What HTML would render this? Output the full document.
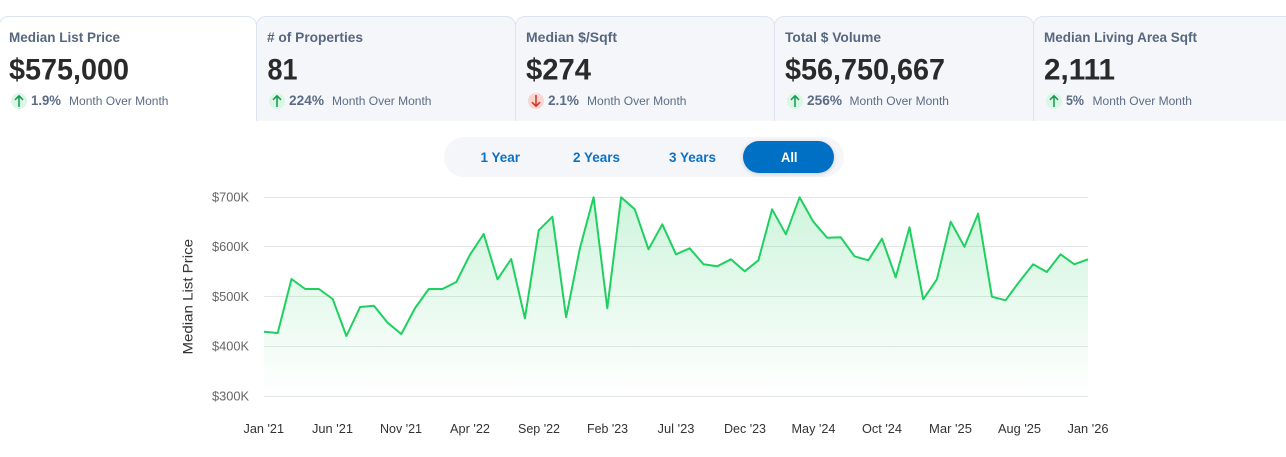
<!DOCTYPE html>
<html lang="en">
<head>
<meta charset="utf-8">
<title>Market Stats</title>
<style>
html,body{margin:0;padding:0;background:#fff;width:1286px;height:457px;overflow:hidden}
svg{display:block;position:absolute;left:0;top:0}
text{font-family:"Liberation Sans",Arial,sans-serif}
.l{font-size:14px;font-weight:700;fill:#56677f}
.v{font-size:29.5px;font-weight:700;fill:#2a2a2a}
.p{font-size:14px;font-weight:700;fill:#5b6b84}
.m{font-size:12.3px;fill:#5c6c85}
.t{font-size:14px;font-weight:700;fill:#0d72c4}
.y{font-size:12.5px;fill:#666}
.x{font-size:12.5px;fill:#333}
.g{stroke:#e6e6e6;stroke-width:1}
.card{fill:#f5f6fa;stroke:#dde3f0;stroke-width:1}
.ar{fill:none;stroke-width:1.5}
</style>
</head>
<body>
<svg width="1286" height="457" viewBox="0 0 1286 457" xmlns="http://www.w3.org/2000/svg">
<defs>
<linearGradient id="ag" x1="0" y1="197" x2="0" y2="396" gradientUnits="userSpaceOnUse">
<stop offset="0" stop-color="#22cf60" stop-opacity=".22"/>
<stop offset="1" stop-color="#22cf60" stop-opacity="0"/>
</linearGradient>
<filter id="sh" x="-20%" y="-30%" width="140%" height="170%"><feDropShadow dx="0" dy="1" stdDeviation="2" flood-color="#000" flood-opacity=".18"/></filter>
</defs>

<!-- cards -->
<path class="card" d="M1033.5 122V26a9.5 9.5 0 0 1 9.5-9.5H1290V122"/>
<path class="card" d="M774.5 122V26a9.5 9.5 0 0 1 9.5-9.5H1024a9.5 9.5 0 0 1 9.5 9.5V122"/>
<path class="card" d="M515.5 122V26a9.5 9.5 0 0 1 9.5-9.5H765a9.5 9.5 0 0 1 9.5 9.5V122"/>
<path class="card" d="M256.5 122V26a9.5 9.5 0 0 1 9.5-9.5H506a9.5 9.5 0 0 1 9.5 9.5V122"/>
<path d="M-1 122V26a9.5 9.5 0 0 1 9.5-9.5H247a9.5 9.5 0 0 1 9.5 9.5V122" fill="#fff" stroke="#dde3f0"/>
<rect x="0" y="121" width="1286" height="6" fill="#fff"/>

<!-- card 1 -->
<text class="l" x="9" y="42" textLength="111" lengthAdjust="spacingAndGlyphs">Median List Price</text>
<text class="v" x="9" y="79.500" textLength="120" lengthAdjust="spacingAndGlyphs">$575,000</text>
<circle cx="19" cy="101" r="8" fill="#d9f7e4"/>
<path class="ar" stroke="#12994f" d="M19 107V96M15 99.800L19 95.800L23 99.800"/>
<text class="p" x="31" y="105" textLength="30" lengthAdjust="spacingAndGlyphs">1.9%</text>
<text class="m" x="69" y="105" textLength="99.500" lengthAdjust="spacingAndGlyphs">Month Over Month</text>

<!-- card 2 -->
<text class="l" x="267" y="42" textLength="96" lengthAdjust="spacingAndGlyphs"># of Properties</text>
<text class="v" x="267.500" y="79.500" textLength="30" lengthAdjust="spacingAndGlyphs">81</text>
<circle cx="277" cy="101" r="8" fill="#d9f7e4"/>
<path class="ar" stroke="#12994f" d="M277 107V96M273 99.800L277 95.800L281 99.800"/>
<text class="p" x="289" y="105" textLength="35" lengthAdjust="spacingAndGlyphs">224%</text>
<text class="m" x="332" y="105" textLength="99.500" lengthAdjust="spacingAndGlyphs">Month Over Month</text>

<!-- card 3 -->
<text class="l" x="526" y="42" textLength="91" lengthAdjust="spacingAndGlyphs">Median $/Sqft</text>
<text class="v" x="526" y="79.500" textLength="65" lengthAdjust="spacingAndGlyphs">$274</text>
<circle cx="536" cy="101" r="8" fill="#fbd5d0"/>
<path class="ar" stroke="#d0351f" d="M536 95V106M532 102.200L536 106.200L540 102.200"/>
<text class="p" x="548" y="105" textLength="31" lengthAdjust="spacingAndGlyphs">2.1%</text>
<text class="m" x="587" y="105" textLength="99.500" lengthAdjust="spacingAndGlyphs">Month Over Month</text>

<!-- card 4 -->
<text class="l" x="785" y="42" textLength="96" lengthAdjust="spacingAndGlyphs">Total $ Volume</text>
<text class="v" x="785" y="79.500" textLength="160" lengthAdjust="spacingAndGlyphs">$56,750,667</text>
<circle cx="795" cy="101" r="8" fill="#d9f7e4"/>
<path class="ar" stroke="#12994f" d="M795 107V96M791 99.800L795 95.800L799 99.800"/>
<text class="p" x="807" y="105" textLength="35" lengthAdjust="spacingAndGlyphs">256%</text>
<text class="m" x="849.500" y="105" textLength="99.500" lengthAdjust="spacingAndGlyphs">Month Over Month</text>

<!-- card 5 -->
<text class="l" x="1044" y="42" textLength="153" lengthAdjust="spacingAndGlyphs">Median Living Area Sqft</text>
<text class="v" x="1044" y="79.500" textLength="71" lengthAdjust="spacingAndGlyphs">2,111</text>
<circle cx="1054" cy="101" r="8" fill="#d9f7e4"/>
<path class="ar" stroke="#12994f" d="M1054 107V96M1050 99.800L1054 95.800L1058 99.800"/>
<text class="p" x="1066" y="105" textLength="18" lengthAdjust="spacingAndGlyphs">5%</text>
<text class="m" x="1092.500" y="105" textLength="99.500" lengthAdjust="spacingAndGlyphs">Month Over Month</text>

<!-- toggle -->
<rect x="444" y="137" width="400" height="40" rx="20" fill="#f5f6fa"/>
<rect x="743" y="141" width="91" height="32" rx="16" fill="#0070c4" filter="url(#sh)"/>
<text class="t" x="480.500" y="162" textLength="39.500" lengthAdjust="spacingAndGlyphs">1 Year</text>
<text class="t" x="573" y="162" textLength="47" lengthAdjust="spacingAndGlyphs">2 Years</text>
<text class="t" x="669" y="162" textLength="47" lengthAdjust="spacingAndGlyphs">3 Years</text>
<text class="t" x="781" y="162" textLength="16.500" lengthAdjust="spacingAndGlyphs" style="fill:#fff">All</text>

<!-- grid -->
<path class="g" d="M264 197.500H1088M264 246.500H1088M264 296.500H1088M264 346.500H1088M264 396.500H1088"/>

<!-- area + line -->
<path fill="url(#ag)" d="M264 331.700L277.700 333L291.500 279L305.200 289L318.900 289L332.700 299L346.400 336L360.100 307L373.900 305.700L387.600 322.700L401.300 334L415.100 308L428.800 289L442.500 289L456.300 282L470 254.700L483.700 234L497.500 279.300L511.200 259L524.900 318.300L538.700 230.300L552.400 216.700L566.100 317.300L579.900 248.300L593.600 197.300L607.300 308.300L621.100 197.300L634.800 209.300L648.500 249.300L662.300 224.300L676 254.300L689.700 248.300L703.500 264.300L717.200 266.300L730.900 259.300L744.700 271.300L758.400 260.300L772.100 209.300L785.900 234.300L799.600 197.300L813.300 221.700L827.100 237.700L840.800 237.300L854.500 256.300L868.300 260.300L882 238.700L895.700 277.300L909.500 227.300L923.200 299.300L936.900 279.300L950.700 221.700L964.400 246.700L978.100 213.700L991.900 296.700L1005.600 300.300L1019.300 281.700L1033.100 264.300L1046.800 272L1060.500 254.300L1074.300 264.300L1088 259.300V396H264Z"/>
<path fill="none" stroke="#1fd060" stroke-width="2" stroke-linejoin="round" d="M264 331.700L277.700 333L291.500 279L305.200 289L318.900 289L332.700 299L346.400 336L360.100 307L373.900 305.700L387.600 322.700L401.300 334L415.100 308L428.800 289L442.500 289L456.300 282L470 254.700L483.700 234L497.500 279.300L511.200 259L524.900 318.300L538.700 230.300L552.400 216.700L566.100 317.300L579.900 248.300L593.600 197.300L607.300 308.300L621.100 197.300L634.800 209.300L648.500 249.300L662.300 224.300L676 254.300L689.700 248.300L703.500 264.300L717.200 266.300L730.900 259.300L744.700 271.300L758.400 260.300L772.100 209.300L785.900 234.300L799.600 197.300L813.300 221.700L827.100 237.700L840.800 237.300L854.500 256.300L868.300 260.300L882 238.700L895.700 277.300L909.500 227.300L923.200 299.300L936.900 279.300L950.700 221.700L964.400 246.700L978.100 213.700L991.900 296.700L1005.600 300.300L1019.300 281.700L1033.100 264.300L1046.800 272L1060.500 254.300L1074.300 264.300L1088 259.300"/>

<!-- y labels -->
<text class="y" x="212" y="201.500" textLength="37" lengthAdjust="spacingAndGlyphs">$700K</text>
<text class="y" x="212" y="251" textLength="37" lengthAdjust="spacingAndGlyphs">$600K</text>
<text class="y" x="212" y="301" textLength="37" lengthAdjust="spacingAndGlyphs">$500K</text>
<text class="y" x="212" y="350.500" textLength="37" lengthAdjust="spacingAndGlyphs">$400K</text>
<text class="y" x="212" y="400.500" textLength="37" lengthAdjust="spacingAndGlyphs">$300K</text>
<text transform="translate(192.500 354.500) rotate(-90)" font-size="14" fill="#333" textLength="115.500" lengthAdjust="spacingAndGlyphs">Median List Price</text>

<!-- x labels -->
<text class="x" x="243.500" y="433" textLength="40.500" lengthAdjust="spacingAndGlyphs">Jan '21</text>
<text class="x" x="312" y="433" textLength="41" lengthAdjust="spacingAndGlyphs">Jun '21</text>
<text class="x" x="380" y="433" textLength="42" lengthAdjust="spacingAndGlyphs">Nov '21</text>
<text class="x" x="450" y="433" textLength="40" lengthAdjust="spacingAndGlyphs">Apr '22</text>
<text class="x" x="518" y="433" textLength="42" lengthAdjust="spacingAndGlyphs">Sep '22</text>
<text class="x" x="587" y="433" textLength="41" lengthAdjust="spacingAndGlyphs">Feb '23</text>
<text class="x" x="657.500" y="433" textLength="37" lengthAdjust="spacingAndGlyphs">Jul '23</text>
<text class="x" x="724" y="433" textLength="42" lengthAdjust="spacingAndGlyphs">Dec '23</text>
<text class="x" x="791.500" y="433" textLength="44" lengthAdjust="spacingAndGlyphs">May '24</text>
<text class="x" x="862" y="433" textLength="40" lengthAdjust="spacingAndGlyphs">Oct '24</text>
<text class="x" x="929" y="433" textLength="43" lengthAdjust="spacingAndGlyphs">Mar '25</text>
<text class="x" x="998" y="433" textLength="43" lengthAdjust="spacingAndGlyphs">Aug '25</text>
<text class="x" x="1067.500" y="433" textLength="41" lengthAdjust="spacingAndGlyphs">Jan '26</text>
</svg>
</body>
</html>
